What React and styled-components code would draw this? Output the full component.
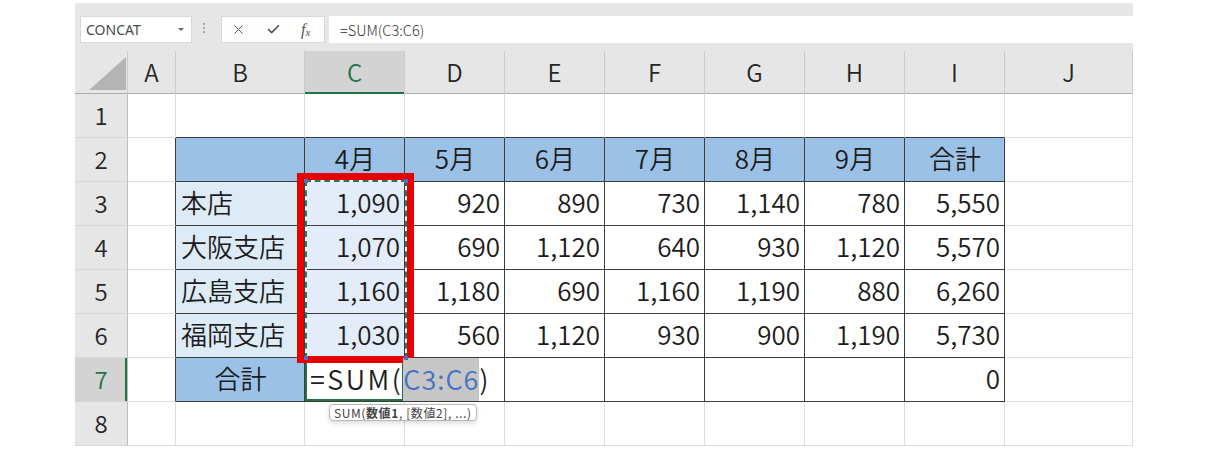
import React from "react";
import styled, { createGlobalStyle } from "styled-components";
import { X, Check } from "lucide-react";

const GlobalStyle = createGlobalStyle`
  body {
    margin: 0;
    background: #fff;
    font-family: "Noto Sans CJK JP", "Noto Sans", sans-serif;
  }
`;

const COLS = ["A", "B", "C", "D", "E", "F", "G", "H", "I", "J"];
const TRACKS = "53px 48px 129px repeat(7, 100px) 128px";
const GREEN = "#217346";
const BLUE = "#9bc2e6";
const PALE = "#ddebf7";
const PICKED = "#e3ecf8";

const MONTHS = ["4月", "5月", "6月", "7月", "8月", "9月", "合計"];
const BRANCHES = [
  ["本店", 1090, 920, 890, 730, 1140, 780, 5550],
  ["大阪支店", 1070, 690, 1120, 640, 930, 1120, 5570],
  ["広島支店", 1160, 1180, 690, 1160, 1190, 880, 6260],
  ["福岡支店", 1030, 560, 1120, 930, 900, 1190, 5730],
];

const fmt = (n) => n.toLocaleString("en-US");

// every row is 10 cells: A..J
function buildRows() {
  const empty = () => COLS.map(() => ({ text: "" }));
  const rows = [];
  rows.push(empty());
  const r2 = empty();
  r2[1] = { text: "", bg: BLUE };
  MONTHS.forEach((m, i) => (r2[i + 2] = { text: m, bg: BLUE, align: "center" }));
  rows.push(r2);
  BRANCHES.forEach(([name, ...nums]) => {
    const r = empty();
    r[1] = { text: name, bg: PALE };
    nums.forEach((n, i) => (r[i + 2] = { text: fmt(n), align: "right", bg: i === 0 ? PICKED : undefined }));
    rows.push(r);
  });
  const r7 = empty();
  r7[1] = { text: "合計", bg: BLUE, align: "center" };
  r7[2] = { formula: true };
  r7[8] = { text: "0", align: "right" };
  rows.push(r7);
  rows.push(empty());
  return rows;
}

const ROWS = buildRows();

export default function App() {
  return (
    <>
      <GlobalStyle />
      <Sheet>
        <FormulaBar>
          <NameBox>
            CONCAT
            <Caret />
          </NameBox>
          <Grip />
          <FxBox>
            <X size={15} strokeWidth={1.6} color="#555" />
            <Check size={15} strokeWidth={2.8} color="#555" />
            <Fx>
              f<sub>x</sub>
            </Fx>
          </FxBox>
          <FormulaInput>=SUM(C3:C6)</FormulaInput>
        </FormulaBar>

        <HeaderRow>
          <Corner>
            <Triangle />
          </Corner>
          {COLS.map((c) => (
            <ColHead key={c} $active={c === "C"}>
              {c}
            </ColHead>
          ))}
        </HeaderRow>

        <Grid>
          {ROWS.map((row, ri) => {
            const r = ri + 1;
            return (
              <React.Fragment key={r}>
                <RowHead $active={r === 7}>{r}</RowHead>
                {row.map((cell, ci) => {
                  const inTable = r >= 2 && r <= 7;
                  const rDark = inTable && ci <= 8;
                  const bDark = ci >= 1 && ci <= 8 && r >= 1 && r <= 7;
                  return (
                    <Cell
                      key={ci}
                      $bg={cell.bg}
                      $align={cell.align}
                      $rDark={rDark}
                      $bDark={bDark}
                      $active={r === 7 && ci === 2}
                    >
                      {cell.formula ? (
                        <Formula>
                          <Part $spacing={2.5}>=SUM(</Part>
                          <RefText>C3:C6</RefText>
                          <Part>)</Part>
                        </Formula>
                      ) : (
                        cell.text
                      )}
                    </Cell>
                  );
                })}
              </React.Fragment>
            );
          })}
        </Grid>

        <Ants>
          <Handle $x="left" $y="top" />
          <Handle $x="right" $y="top" />
          <Handle $x="left" $y="bottom" />
          <Handle $x="right" $y="bottom" />
        </Ants>
        <RedFrame />
        <Tip>
          SUM(<b>数値1</b>, [数値2], ...)
        </Tip>
      </Sheet>
    </>
  );
}

const Sheet = styled.div`
  position: relative;
  width: 1058px;
  margin: 3px 0 0 75px;
`;

const FormulaBar = styled.div`
  box-sizing: border-box;
  height: 44px;
  display: flex;
  align-items: flex-start;
  padding: 12px 0 0 5px;
  background: #e6e6e6;
  border-top: 1px solid #ececec;
`;

const NameBox = styled.div`
  box-sizing: border-box;
  width: 112px;
  height: 27px;
  display: flex;
  align-items: center;
  justify-content: space-between;
  padding: 0 7px 0 5px;
  background: #fff;
  border: 1px solid #d8d8d8;
  font-family: "Noto Sans", "Open Sans", sans-serif;
  font-size: 14px;
  color: #4a4a4a;
`;

const Caret = styled.span`
  width: 0;
  height: 0;
  border-left: 3px solid transparent;
  border-right: 3px solid transparent;
  border-top: 3px solid #666;
`;

const Grip = styled.span`
  width: 2px;
  height: 2px;
  margin: 7px 0 0 11px;
  background: #a8a8a8;
  box-shadow: 0 4px 0 #a8a8a8, 0 8px 0 #a8a8a8;
`;

const FxBox = styled.div`
  box-sizing: border-box;
  width: 104px;
  height: 27px;
  margin-left: 16px;
  display: flex;
  align-items: center;
  gap: 20px;
  padding-left: 9px;
  background: #fdfdfd;
  border: 1px solid #d8d8d8;
`;

const Fx = styled.span`
  font-family: "Liberation Serif", serif;
  font-style: italic;
  font-size: 16px;
  color: #555;
  line-height: 1;
  sub {
    font-size: 11px;
    vertical-align: -1px;
  }
`;

const FormulaInput = styled.div`
  box-sizing: border-box;
  flex: 1;
  height: 27px;
  margin-left: 4px;
  display: flex;
  align-items: center;
  padding-left: 11px;
  background: #fff;
  font-size: 14.5px;
  font-weight: 300;
  color: #333;
`;

const HeaderRow = styled.div`
  display: grid;
  grid-template-columns: ${TRACKS};
  height: 47px;
  align-items: end;
  background: #e6e6e6;
  box-shadow: inset 0 -1px 0 #acacac;
`;

const Corner = styled.div`
  box-sizing: border-box;
  height: 43px;
  display: flex;
  align-items: flex-end;
  justify-content: flex-end;
  padding: 0 1px 4px 0;
  border-right: 1px solid #cacaca;
`;

const Triangle = styled.div`
  width: 37px;
  height: 33px;
  background: #b4b4b4;
  clip-path: polygon(100% 0, 100% 100%, 0 100%);
`;

const ColHead = styled.div`
  box-sizing: border-box;
  height: 43px;
  display: flex;
  align-items: center;
  justify-content: center;
  padding-bottom: 2px;
  border-right: 1px solid #cacaca;
  font-size: 24px;
  font-weight: 350;
  line-height: 1;
  color: ${(p) => (p.$active ? GREEN : "#262626")};
  background: ${(p) => (p.$active ? "#d3d3d3" : "transparent")};
  box-shadow: ${(p) => (p.$active ? `inset 0 -2px 0 ${GREEN}` : "inset 0 -1px 0 #acacac")};
`;

const Grid = styled.div`
  display: grid;
  grid-template-columns: ${TRACKS};
  grid-auto-rows: 44px;
`;

const RowHead = styled.div`
  box-sizing: border-box;
  display: flex;
  align-items: center;
  justify-content: center;
  padding-bottom: 2px;
  border-right: 1px solid #bdbdbd;
  border-bottom: 1px solid #d6d6d6;
  font-size: 24px;
  font-weight: 350;
  line-height: 1;
  color: ${(p) => (p.$active ? GREEN : "#262626")};
  background: ${(p) => (p.$active ? "#d3d3d3" : "#e6e6e6")};
  box-shadow: ${(p) => (p.$active ? `inset -2px 0 0 ${GREEN}` : "none")};
`;

const Cell = styled.div`
  box-sizing: border-box;
  display: flex;
  align-items: ${(p) => (p.$active ? "stretch" : "center")};
  justify-content: ${(p) =>
    p.$align === "right" ? "flex-end" : p.$align === "center" ? "center" : "flex-start"};
  padding: 0 4px ${(p) => (p.$active ? "0" : "3px")} 5px;
  border-right: 1px solid ${(p) => (p.$rDark ? "#3c3c3c" : "#dcdcdc")};
  border-bottom: 1px solid ${(p) => (p.$bDark ? "#3c3c3c" : "#dcdcdc")};
  background: ${(p) => p.$bg || "transparent"};
  box-shadow: ${(p) => (p.$active ? `inset 0 0 0 2px ${GREEN}` : "none")};
  font-size: 26px;
  font-weight: 350;
  line-height: 1;
  color: #1c1c1c;
  white-space: nowrap;
  overflow: visible;
`;

const Formula = styled.div`
  display: flex;
  align-items: stretch;
  font-size: 27px;
`;

const Part = styled.span`
  display: flex;
  align-items: center;
  padding-bottom: 3px;
  letter-spacing: ${(p) => p.$spacing || 0}px;
`;

const RefText = styled(Part)`
  background: #c6c6c6;
  color: #4472c4;
  letter-spacing: 1px;
  position: relative;
  z-index: 1;
`;

const Ants = styled.div`
  position: absolute;
  left: 230px;
  top: 177px;
  width: 102px;
  height: 179px;
  box-sizing: border-box;
  border: 2px solid #fff;
  pointer-events: none;
  &::before {
    content: "";
    position: absolute;
    inset: -2px;
    border: 2px dashed #2b7563;
  }
`;

const Handle = styled.span`
  position: absolute;
  z-index: 1;
  width: 4px;
  height: 4px;
  background: #4a72c8;
  ${(p) => p.$x}: -3px;
  ${(p) => p.$y}: -3px;
`;

const RedFrame = styled.div`
  position: absolute;
  left: 222px;
  top: 170px;
  width: 117px;
  height: 190px;
  box-sizing: border-box;
  border: 7px solid #e60000;
  pointer-events: none;
`;

const Tip = styled.div`
  position: absolute;
  left: 254px;
  top: 401px;
  z-index: 2;
  height: 17px;
  box-sizing: border-box;
  padding: 0 4px;
  display: flex;
  align-items: center;
  background: #fff;
  border: 1px solid #b8b8b8;
  border-radius: 4px;
  box-shadow: 0 2px 5px rgba(0, 0, 0, 0.15);
  font-size: 12px;
  letter-spacing: 0.6px;
  color: #444;
  white-space: nowrap;
  b {
    font-weight: 700;
  }
`;
